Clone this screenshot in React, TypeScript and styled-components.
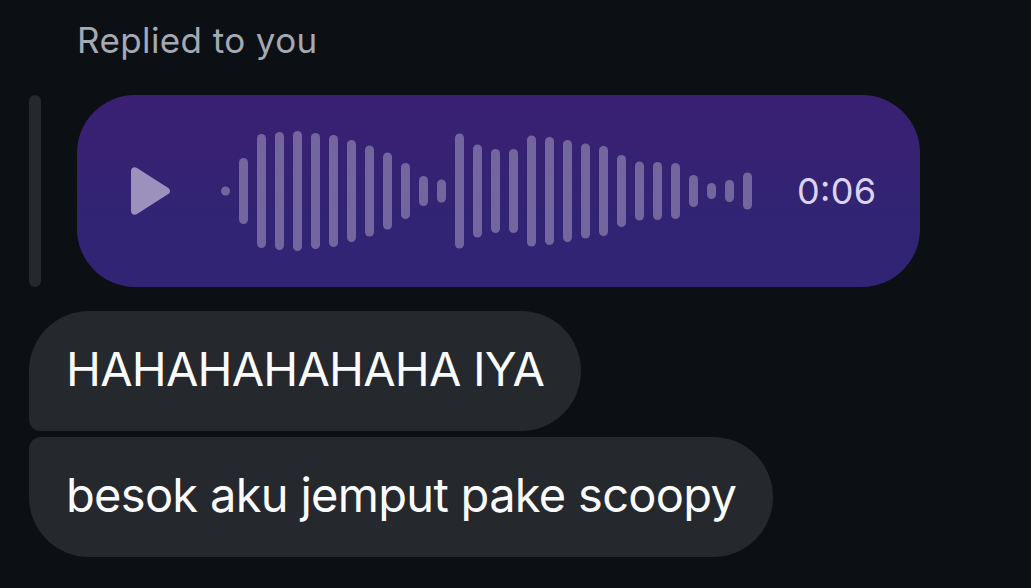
import styled, { createGlobalStyle, css } from "styled-components";

const BAR_WIDTH = 9;
const BAR_STEP = 18;
const WAVE_HEIGHT = 120;

const waveHeights = [
  9, 66, 114, 118, 120, 116, 112, 102, 91, 77, 56, 30, 23, 115, 93, 84, 84, 111,
  108, 102, 95, 90, 72, 59, 58, 56, 32, 16, 22, 37,
];

const waveWidth = (waveHeights.length - 1) * BAR_STEP + BAR_WIDTH;

interface IBubbleProps {
  $position: "first" | "last";
  $spacing: string;
}

const GlobalStyle = createGlobalStyle`
  * {
    box-sizing: border-box;
  }
  body {
    margin: 0;
    background-color: #0c0f14;
    font-family: "Inter", "Liberation Sans", sans-serif;
  }
`;

const Chat = styled.main`
  display: flex;
  flex-direction: column;
  align-items: flex-start;
  width: 1031px;
  height: 588px;
  padding: 18px 29px 0;
  overflow: hidden;
  background-color: #0c0f14;
`;

const ReplyLabel = styled.span`
  padding-left: 48px;
  font-size: 35px;
  line-height: 44px;
  letter-spacing: 0.4px;
  color: #a5a9b1;
  white-space: nowrap;
`;

const Quote = styled.div`
  display: flex;
  gap: 36px;
  height: 192px;
  margin: 33px 0 24px;
`;

const QuoteLine = styled.div`
  width: 12px;
  border-radius: 6px;
  background-color: #25282d;
`;

const VoiceMessage = styled.div`
  display: flex;
  align-items: center;
  width: 843px;
  padding-left: 54px;
  border-radius: 58px;
  background: linear-gradient(#3a2072, #312474 65%, #312474);
`;

const PlayButton = styled.button`
  display: flex;
  width: 40px;
  height: 48px;
  margin-right: 50px;
  padding: 0;
  border: none;
  background: none;
`;

const Duration = styled.span`
  margin-left: 45px;
  font-size: 36px;
  line-height: 44px;
  letter-spacing: 0.3px;
  font-feature-settings: "case";
  color: #dcd3f1;
`;

const Messages = styled.div`
  display: flex;
  flex-direction: column;
  align-items: flex-start;
  gap: 6px;
`;

const Bubble = styled.div<IBubbleProps>`
  height: 120px;
  padding: 0 37px;
  font-size: 47px;
  line-height: 115px;
  color: #fafbfd;
  white-space: nowrap;
  background-color: #25282d;
  ${({ $position, $spacing }) => css`
    width: ${$position === "first" ? 552 : 744}px;
    border-radius: ${$position === "first"
      ? "60px 60px 60px 12px"
      : "12px 60px 60px 60px"};
    letter-spacing: ${$spacing};
  `}
`;

const Waveform = () => (
  <svg width={waveWidth} height={WAVE_HEIGHT}>
    {waveHeights.map((height, index) => (
      <rect
        key={index}
        x={index * BAR_STEP}
        y={(WAVE_HEIGHT - height) / 2}
        width={BAR_WIDTH}
        height={height}
        rx={BAR_WIDTH / 2}
        fill="#73669f"
      />
    ))}
  </svg>
);

const App = () => {
  return (
    <>
      <GlobalStyle />
      <Chat>
        <ReplyLabel>Replied to you</ReplyLabel>
        <Quote>
          <QuoteLine />
          <VoiceMessage>
            <PlayButton type="button" aria-label="Play">
              <svg width="40" height="48" viewBox="0 0 40 48">
                <path
                  d="M0 4C0 .8 3.2-.9 6 .9L37.3 20.9C39.6 22.4 39.6 25.6 37.3 27.1L6 47.1C3.2 48.9 0 47.2 0 44Z"
                  fill="#9c90bc"
                />
              </svg>
            </PlayButton>
            <Waveform />
            <Duration>0:06</Duration>
          </VoiceMessage>
        </Quote>
        <Messages>
          <Bubble $position="first" $spacing="-0.8px">
            HAHAHAHAHAHA IYA
          </Bubble>
          <Bubble $position="last" $spacing="-0.7px">
            besok aku jemput pake scoopy
          </Bubble>
        </Messages>
      </Chat>
    </>
  );
};

export default App;
